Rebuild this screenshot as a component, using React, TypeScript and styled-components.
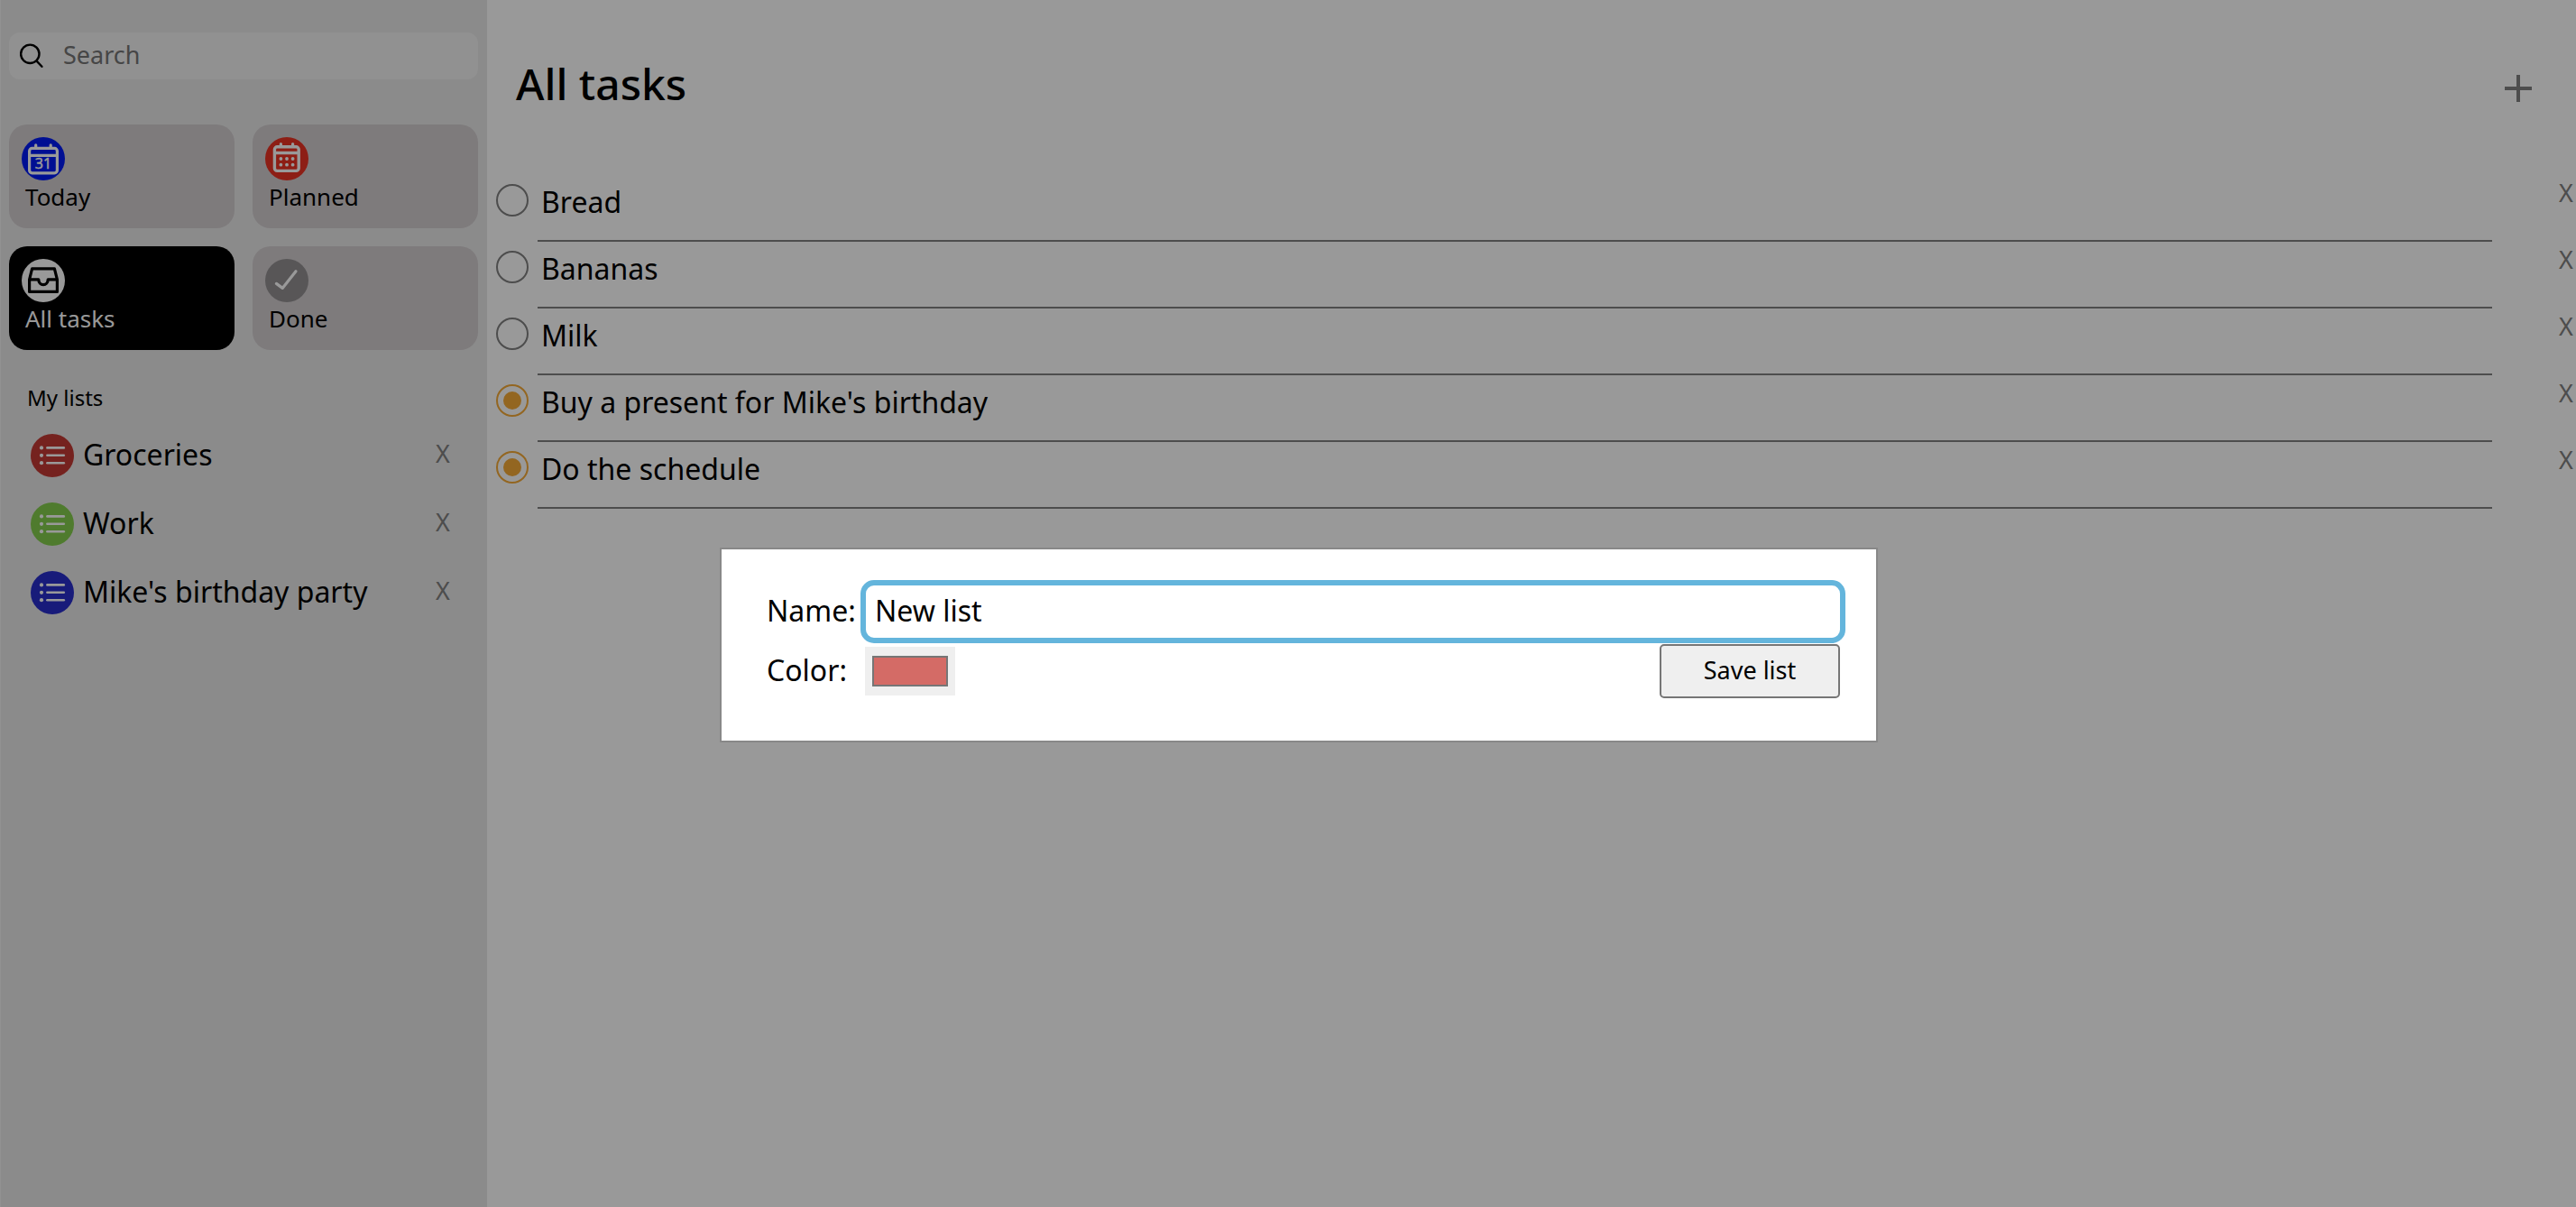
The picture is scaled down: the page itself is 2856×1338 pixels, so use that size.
import React, { useState } from "react";
import styled, { createGlobalStyle } from "styled-components";

const GlobalStyle = createGlobalStyle`
  * { box-sizing: border-box; }
  body {
    margin: 0;
    background: #fff;
    color: #000;
    font-family: "Noto Sans", "Open Sans", sans-serif;
    font-size: 32px;
  }
  button, input { font: inherit; color: inherit; margin: 0; }
  button { background: none; border: 0; padding: 0; cursor: pointer; }
  ul { list-style: none; margin: 0; padding: 0; }
  h1, h2 { margin: 0; }
`;

const Page = styled.div`
  display: flex;
  min-height: 100vh;
`;

const Sidebar = styled.aside`
  flex: 0 0 540px;
  padding: 36px 10px 0 9px;
  background: #e8e8e8;
  border-left: 1px solid #f4f4f4;
`;

const SearchBox = styled.label`
  display: flex;
  align-items: center;
  height: 52px;
  padding: 0 12px;
  margin-bottom: 50px;
  border-radius: 12px;
  background: #f2f2f2;
`;

const SearchInput = styled.input`
  flex: 1;
  min-width: 0;
  height: 52px;
  margin-left: 22px;
  padding: 0 0 4px;
  border: 0;
  outline: 0;
  background: transparent;
  font-size: 27px;
  &::placeholder { color: #757575; opacity: 1; }
`;

const Filters = styled.nav`
  display: grid;
  grid-template-columns: 1fr 1fr;
  gap: 20px;
`;

const FilterCard = styled.button<{ $active?: boolean }>`
  display: flex;
  flex-direction: column;
  align-items: flex-start;
  padding: 14px 14px 17px;
  border-radius: 20px;
  background: ${(p) => (p.$active ? "#000" : "#d2cdcf")};
  color: ${(p) => (p.$active ? "#fff" : "#000")};
`;

const FilterLabel = styled.span`
  padding-left: 4px;
  font-size: 26px;
  line-height: 36px;
`;

const Badge = styled.svg`
  display: block;
  flex: none;
  width: 48px;
  height: 48px;
  border-radius: 50%;
`;

const ListsTitle = styled.h2`
  margin: 37px 0 10px 20px;
  font-size: 24px;
  font-weight: 400;
  line-height: 32px;
`;

const ListItem = styled.li`
  display: flex;
  align-items: center;
  height: 76px;
  padding: 0 31px 0 24px;
`;

const ListName = styled.span`
  flex: 1;
  padding: 0 0 4px 10px;
`;

const DeleteButton = styled.button`
  flex: none;
  width: 16px;
  padding-bottom: 4px;
  color: #808080;
  font-size: 27px;
  line-height: 28px;
`;

const Main = styled.main`
  flex: 1;
  min-width: 0;
`;

const Header = styled.header`
  display: flex;
  align-items: flex-start;
  justify-content: space-between;
  padding: 60px 49px 58px 32px;
`;

const Title = styled.h1`
  font-size: 48px;
  font-weight: 500;
  line-height: 66px;
`;

const AddButton = styled.button`
  display: flex;
  align-items: center;
  height: 76px;
`;

const Task = styled.li`
  display: flex;
  align-items: flex-start;
  padding: 0 3px 0 10px;
`;

const TaskDeleteButton = styled(DeleteButton)`
  margin-top: 6px;
`;

const Toggle = styled.input`
  appearance: none;
  flex: none;
  display: grid;
  place-items: center;
  width: 36px;
  height: 36px;
  margin-top: 10px;
  border: 2px solid #808080;
  border-radius: 50%;
  &:checked { border-color: #f5aa38; }
  &:checked::before {
    content: "";
    width: 20px;
    height: 20px;
    border-radius: 50%;
    background: #f5aa38;
  }
`;

const TaskName = styled.label`
  flex: 1;
  height: 74px;
  margin: 0 74px 0 10px;
  padding-left: 4px;
  border-bottom: 2px solid #808080;
  line-height: 60px;
`;

const Overlay = styled.div`
  position: fixed;
  inset: 0;
  display: grid;
  place-items: center;
  padding: 92px 0 0 24px;
  background: rgba(0, 0, 0, 0.4);
`;

const Dialog = styled.form`
  display: grid;
  grid-template-columns: 104px 1fr;
  align-items: center;
  width: 1284px;
  max-width: 95vw;
  padding: 34px 34px 46px 50px;
  border: 2px solid #888;
  background: #fff;
`;

const FieldLabel = styled.label`
  padding-bottom: 3px;
`;

const NameInput = styled.input`
  width: 100%;
  height: 70px;
  padding: 0 10px 3px;
  border: 6px solid #64b5dc;
  border-radius: 15px;
  outline: 0;
  background: #fff;
`;

const DialogFooter = styled.div`
  display: flex;
  align-items: center;
  justify-content: space-between;
  height: 62px;
  padding: 0 6px 0 5px;
`;

const ColorInput = styled.input`
  appearance: none;
  width: 100px;
  height: 54px;
  padding: 0;
  border: 0;
  background: #efefef;
  &::-webkit-color-swatch-wrapper { padding: 10px 8px; }
  &::-webkit-color-swatch { border: 2px solid #767676; border-radius: 0; }
`;

const SaveButton = styled.button`
  width: 200px;
  height: 60px;
  padding-bottom: 4px;
  border: 2px solid #767676;
  border-radius: 5px;
  background: #efefef;
  font-size: 27px;
`;

const SearchIcon = () => (
  <svg width="26" height="28" viewBox="0 0 26 28" fill="none" stroke="#000" strokeWidth="2.4" strokeLinecap="round">
    <circle cx="11.3" cy="11.8" r="10.2" />
    <path d="M18.6 19.6 24.4 25.8" />
  </svg>
);

const TodayIcon = () => (
  <Badge viewBox="0 0 48 48" fill="none" stroke="#fff">
    <rect width="48" height="48" fill="#001af5" stroke="none" />
    <rect x="8.6" y="12.4" width="30.8" height="27.4" rx="3" strokeWidth="3.2" />
    <path d="M8.5 20.4H39.5" strokeWidth="3.4" />
    <path d="M15.7 12V8.8M32.2 12V8.8" strokeWidth="3.2" strokeLinecap="round" />
    <text x="24" y="35.2" textAnchor="middle" fontFamily="Open Sans, sans-serif" fontSize="16" fill="#fff" strokeWidth="0.5">31</text>
  </Badge>
);

const PlannedIcon = () => (
  <Badge viewBox="0 0 48 48" fill="none" stroke="#fff">
    <rect width="48" height="48" fill="#eb3223" stroke="none" />
    <rect x="10.4" y="10.8" width="26.8" height="26.6" rx="3" strokeWidth="3.4" />
    <path d="M10.4 17.5H37.2" strokeWidth="3.4" />
    <path d="M17.4 10V7.6M30.6 10V7.6" strokeWidth="3.2" strokeLinecap="round" />
    {[24, 30.7].map((y) =>
      [17.4, 24, 30.6].map((x) => <circle key={`${x}-${y}`} cx={x} cy={y} r="1.9" fill="#fff" stroke="none" />)
    )}
  </Badge>
);

const InboxIcon = () => (
  <Badge viewBox="0 0 48 48" fill="none" stroke="#000" strokeWidth="3.2" strokeLinejoin="round">
    <rect width="48" height="48" fill="#fff" stroke="none" />
    <path d="M11.6 10.8H36.4L39.4 22.8V36.4H8.6V22.8Z" />
    <path d="M8.6 22.8H18.8C18.8 30.6 29.2 30.6 29.2 22.8H39.4" />
  </Badge>
);

const DoneIcon = () => (
  <Badge viewBox="0 0 48 48" fill="none" stroke="#fff" strokeWidth="3.2" strokeLinecap="round" strokeLinejoin="round">
    <rect width="48" height="48" fill="#939092" stroke="none" />
    <path d="M12.4 27.4 19.2 32.4 34 13.8" />
  </Badge>
);

const ListIcon = ({ color }: { color: string }) => (
  <Badge viewBox="0 0 48 48" stroke="#fff" strokeWidth="2.6" strokeLinecap="round">
    <rect width="48" height="48" fill={color} stroke="none" />
    {[15.4, 23.8, 32.2].map((y) => (
      <g key={y}>
        <circle cx="12" cy={y} r="2.1" fill="#fff" stroke="none" />
        <path d={`M18.4 ${y}H36.8`} />
      </g>
    ))}
  </Badge>
);

const filters = [
  { name: "Today", Icon: TodayIcon },
  { name: "Planned", Icon: PlannedIcon },
  { name: "All tasks", Icon: InboxIcon },
  { name: "Done", Icon: DoneIcon },
];

const lists = [
  { name: "Groceries", color: "#c33a35" },
  { name: "Work", color: "#84cd4d" },
  { name: "Mike's birthday party", color: "#282dcb" },
];

const initialTasks = [
  { name: "Bread", done: false },
  { name: "Bananas", done: false },
  { name: "Milk", done: false },
  { name: "Buy a present for Mike's birthday", done: true },
  { name: "Do the schedule", done: true },
];

const App = () => {
  const [active, setActive] = useState("All tasks");
  const [tasks, setTasks] = useState(initialTasks);
  const [name, setName] = useState("New list");
  const [color, setColor] = useState("#d46b66");

  const toggle = (index: number) =>
    setTasks(tasks.map((t, i) => (i === index ? { ...t, done: !t.done } : t)));

  return (
    <>
      <GlobalStyle />
      <Page>
        <Sidebar>
          <SearchBox>
            <SearchIcon />
            <SearchInput type="text" placeholder="Search" aria-label="Search" />
          </SearchBox>
          <Filters>
            {filters.map(({ name: label, Icon }) => (
              <FilterCard key={label} type="button" $active={label === active} onClick={() => setActive(label)}>
                <Icon />
                <FilterLabel>{label}</FilterLabel>
              </FilterCard>
            ))}
          </Filters>
          <ListsTitle>My lists</ListsTitle>
          <ul>
            {lists.map((list) => (
              <ListItem key={list.name}>
                <ListIcon color={list.color} />
                <ListName>{list.name}</ListName>
                <DeleteButton type="button">X</DeleteButton>
              </ListItem>
            ))}
          </ul>
        </Sidebar>
        <Main>
          <Header>
            <Title>{active}</Title>
            <AddButton type="button" aria-label="Add task">
              <svg width="30" height="30" viewBox="0 0 30 30" stroke="#808080" strokeWidth="4">
                <path d="M15 0V30M0 15H30" />
              </svg>
            </AddButton>
          </Header>
          <ul>
            {tasks.map((task, i) => (
              <Task key={task.name}>
                <Toggle id={`task-${i}`} type="checkbox" checked={task.done} onChange={() => toggle(i)} />
                <TaskName htmlFor={`task-${i}`}>{task.name}</TaskName>
                <TaskDeleteButton type="button">X</TaskDeleteButton>
              </Task>
            ))}
          </ul>
        </Main>
      </Page>
      <Overlay>
        <Dialog onSubmit={(e) => e.preventDefault()}>
          <FieldLabel htmlFor="list-name">Name:</FieldLabel>
          <NameInput id="list-name" type="text" value={name} onChange={(e) => setName(e.target.value)} />
          <FieldLabel htmlFor="list-color">Color:</FieldLabel>
          <DialogFooter>
            <ColorInput id="list-color" type="color" value={color} onChange={(e) => setColor(e.target.value)} />
            <SaveButton type="submit">Save list</SaveButton>
          </DialogFooter>
        </Dialog>
      </Overlay>
    </>
  );
};

export default App;
